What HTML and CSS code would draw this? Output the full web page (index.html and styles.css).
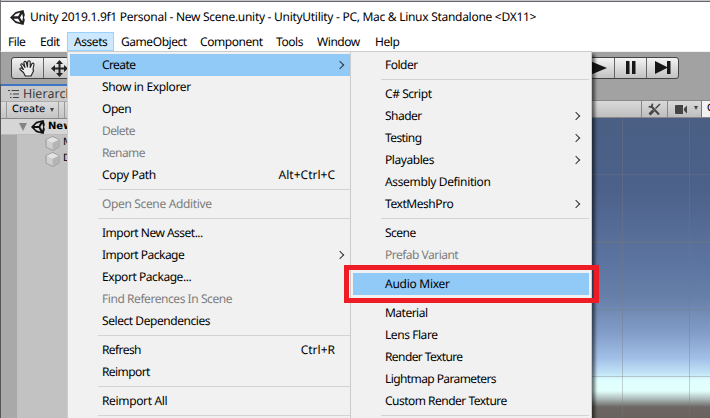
FILE: index.html
```html
<!DOCTYPE html>
<html lang="en">
<head>
<meta charset="utf-8">
<title>Unity Editor</title>
<link rel="stylesheet" href="styles.css">
</head>
<body>
<div class="window">
  <header class="titlebar">
    <svg class="logo" width="15" height="15" viewBox="0 0 15 15" fill="#222" fill-rule="evenodd"><path d="M0 7.500 5.500 2 13.500 0 14.800 5 14 7.500 14.800 10 13.500 15 5.500 13ZM5.700 4 10.200 2.500 8.200 6.300H3.600ZM5.700 11 10.200 12.500 8.200 8.700H3.600ZM10 7.500 12.200 3.700 13 7.500 12.200 11.300Z"/></svg>
    <span class="title">Unity 2019.1.9f1 Personal - New Scene.unity - UnityUtility - PC, Mac &amp; Linux Standalone &lt;DX11&gt;</span>
  </header>
  <nav class="menubar">
    <span class="w-file">File</span><span class="w-edit">Edit</span><span class="w-assets active">Assets</span><span class="w-object">GameObject</span><span class="w-component">Component</span><span class="w-tools">Tools</span><span class="w-window">Window</span><span class="w-help">Help</span>
  </nav>
  <div class="toolbar">
    <div class="group tools">
      <span><svg width="17" height="17" viewBox="0 0 17 17" fill="#eee" stroke="#222" stroke-width="1.100" stroke-linejoin="round"><path d="M6 15.500 4.500 12.500 1 9.500Q.5 7.800 2.300 8L4.500 9.500 1.800 5Q2 3.200 3.500 4L6 7.500 4.800 2.500Q5.800.5 7.200 2L8.500 7 8.700 1.500Q10 0 11.200 1.500V7.500L13 3.500Q14.800 2.500 15 4.500L14 9 14.500 11 12 16H6.500Z"/></svg></span>
      <span><svg width="17" height="17" viewBox="0 0 17 17" fill="#222"><path d="M8.500 0 12 4H9.500V7.500H13V5L17 8.500 13 12V9.500H9.500V13H12L8.500 17 5 13H7.500V9.500H4V12L0 8.500 4 5V7.500H7.500V4H5Z"/></svg></span>
    </div>
    <div class="group play">
      <span><svg width="18" height="14" viewBox="0 0 18 14"><path d="M1 0 18 7 1 14Z" fill="#161616"/></svg></span>
      <span><svg width="10" height="14" viewBox="0 0 10 14"><path d="M0 0H3.500V13H0ZM6 0H9.500V13H6Z" fill="#161616"/></svg></span>
      <span><svg width="16" height="14" viewBox="0 0 16 14"><path d="M0 0 12 6V0H15.500V13H12V7L0 13Z" fill="#161616"/></svg></span>
    </div>
  </div>
  <div class="workspace">
    <div class="edge"></div>
    <section class="hierarchy">
      <div class="tab"><svg width="12" height="10" viewBox="0 0 12 10" stroke="#444" stroke-width="1.200"><path d="M0 1.500H2M3.500 1.500H11M2 5H3.500M5 5H11M2 8.500H3.500M5 8.500H11"/></svg><span>Hierarch</span></div>
      <div class="subbar"><span class="create">Create</span><i class="caret"></i><span class="filter"></span></div>
      <div class="tree">
        <div class="scene"><i class="fold"></i><svg width="14" height="14" viewBox="0 0 15 15" fill="#111" fill-rule="evenodd"><path d="M0 7.500 5.500 2 13.500 0 14.800 5 14 7.500 14.800 10 13.500 15 5.500 13ZM5.700 4 10.200 2.500 8.200 6.300H3.600ZM5.700 11 10.200 12.500 8.200 8.700H3.600ZM10 7.500 12.200 3.700 13 7.500 12.200 11.300Z"/></svg><b>New</b></div>
        <div class="node"><svg width="15" height="15" viewBox="0 0 15 15"><path d="M7.500.5 14 3.500V11L7.500 14.500 1 11V3.500Z" fill="#cfcfcf" stroke="#9a9a9a"/><path d="M1.500 3.800 7.500 1 13.500 3.800 7.500 6.800Z" fill="#e2e2e2"/><path d="M7.500 7V14L13.500 10.800V4Z" fill="#b5b5b5"/></svg><span>M</span></div>
        <div class="node"><svg width="15" height="15" viewBox="0 0 15 15"><path d="M7.500.5 14 3.500V11L7.500 14.500 1 11V3.500Z" fill="#cfcfcf" stroke="#9a9a9a"/><path d="M1.500 3.800 7.500 1 13.500 3.800 7.500 6.800Z" fill="#e2e2e2"/><path d="M7.500 7V14L13.500 10.800V4Z" fill="#b5b5b5"/></svg><span>D</span></div>
      </div>
    </section>
    <section class="sceneview">
      <div class="viewbar">
        <span class="cell wrench"><svg width="13" height="13" viewBox="0 0 13 13" fill="none" stroke="#444"><path d="M3 3 11 11.500" stroke-width="2"/><path d="M.7 3.500Q4 5 4.500.7" stroke-width="1.700"/><path d="M12 1 7.500 5.500" stroke-width="1.500"/><path d="M5.500 7.500 1.500 11.500" stroke-width="3"/></svg></span>
        <span class="cell camera"><svg width="13" height="9" viewBox="0 0 13 9" fill="#444"><path d="M1 0H8V9H1Q0 9 0 8V1Q0 0 1 0ZM9 3.500 12 .5V8.500L9 5.500Z"/></svg><i class="caret"></i></span>
        <span class="search">G</span>
      </div>
      <div class="sky"></div>
    </section>
  </div>
</div>

<div class="menu assets-menu">
  <div class="item hot tight">Create<i class="arrow"></i></div>
  <div class="item loose">Show in Explorer</div>
  <div class="item">Open</div>
  <div class="item off tight">Delete</div>
  <div class="item off tight">Rename</div>
  <div class="item loose">Copy Path<kbd>Alt+Ctrl+C</kbd></div>
  <hr>
  <div class="item off loose">Open Scene Additive</div>
  <hr>
  <div class="item snug">Import New Asset...</div>
  <div class="item snug">Import Package<i class="arrow"></i></div>
  <div class="item">Export Package...</div>
  <div class="item off">Find References In Scene</div>
  <div class="item">Select Dependencies</div>
  <hr>
  <div class="item tight">Refresh<kbd>Ctrl+R</kbd></div>
  <div class="item tight">Reimport</div>
  <hr>
  <div class="item loose">Reimport All</div>
  <hr>
</div>

<div class="menu create-menu">
  <div class="item snug">Folder</div>
  <hr>
  <div class="item">C# Script</div>
  <div class="item snug">Shader<i class="arrow"></i></div>
  <div class="item tight">Testing<i class="arrow"></i></div>
  <div class="item">Playables<i class="arrow"></i></div>
  <div class="item loose">Assembly Definition</div>
  <div class="item">TextMeshPro<i class="arrow"></i></div>
  <hr>
  <div class="item snug">Scene</div>
  <div class="item off snug">Prefab Variant</div>
  <hr>
  <div class="item hot wide">Audio Mixer</div>
  <hr>
  <div class="item snug">Material</div>
  <div class="item">Lens Flare</div>
  <div class="item tight">Render Texture</div>
  <div class="item tight">Lightmap Parameters</div>
  <div class="item snug">Custom Render Texture</div>
  <hr>
</div>
<div class="highlight-box"></div>
</body>
</html>
```
FILE: styles.css
```css
* { box-sizing: border-box; }
body {
  margin: 0;
  width: 710px;
  height: 418px;
  overflow: hidden;
  position: relative;
  font: 12px/22px "Noto Sans", "Open Sans", sans-serif;
  letter-spacing: -.44px;
  text-rendering: geometricPrecision;
  color: #000;
}
svg { display: block; flex: none; }
.window { height: 418px; display: flex; flex-direction: column; background: #a2a2a2; }

.titlebar {
  height: 32px;
  background: linear-gradient(#c6c6ca 1px, #66656a 1px 2px, #fff 2px);
  border-left: 1px solid #77767b;
  display: flex;
  align-items: center;
  padding: 2px 0 0 9px;
}
.title { margin-left: 5px; white-space: nowrap; letter-spacing: -.285px; }
.menubar {
  height: 20px;
  flex: none;
  background: #fff;
  border-left: 1px solid #77767b;
  border-bottom: 1px solid #f0f0f0;
  display: flex;
}
.menubar span { height: 19px; line-height: 19px; padding-left: 7px; white-space: nowrap; }
.w-file { width: 32px; }
.w-edit { width: 34px; }
.w-assets { width: 47px; }
.w-object { width: 79px; }
.w-component { width: 76px; }
.w-tools { width: 41px; }
.w-window { width: 58px; }
.menubar .active { background: #cce8ff; border: 1px solid #99d1ff; line-height: 17px; padding-left: 6px; }

.toolbar {
  height: 32px;
  flex: none;
  display: flex;
  justify-content: space-between;
  padding: 5px 31px 0 10px;
  border-left: 1px solid #77767b;
}
.group { display: flex; height: 22px; border: 1px solid #444; border-radius: 3px; background: linear-gradient(#f4f4f4, #c2c2c2); }
.group span { width: 32px; display: flex; align-items: center; justify-content: center; }
.group span + span { border-left: 1px solid #666; }
.tools span { width: 31px; }

.workspace { flex: 1; display: flex; min-height: 0; letter-spacing: 0; }
.edge { width: 1px; background: #555; }
.hierarchy { width: 229px; border-top: 2px solid #3e74c4; overflow: hidden; }
.tab { height: 15px; display: flex; align-items: center; background: #c9c9c9; padding-left: 7px; color: #333; font: 12.5px/15px "Open Sans", sans-serif; gap: 3px; }
.subbar { height: 18px; display: flex; align-items: center; background: linear-gradient(#dcdcdc, #c4c4c4); border-top: 1px solid #aaa; border-bottom: 1px solid #888; }
.create { width: 53px; margin-left: 5px; border-left: 1px solid #999; border-right: 1px solid #999; padding-left: 5px; font: 10px/16px "DejaVu Sans", sans-serif; }
.filter { width: 20px; height: 16px; margin-left: 10px; border-left: 1px solid #999; }
.caret { border: 2.5px solid transparent; border-top: 4px solid #444; border-bottom: 0; margin-left: -9px; }
.tree { height: 300px; background: linear-gradient(90deg, #a9a9a9 16px, #c2c2c2 16px); font: 10px/16px "DejaVu Sans", sans-serif; }
.scene { height: 16px; display: flex; align-items: center; background: #d6d6d6; padding-left: 18px; border-bottom: 1px solid #bbb; white-space: nowrap; }
.scene svg { margin: 0 3px 0 4px; }
.fold { border: 4.5px solid transparent; border-top: 8px solid #858585; border-bottom: 0; }
.node { height: 16px; display: flex; align-items: center; padding-left: 44px; gap: 3px; white-space: nowrap; }

.sceneview { flex: 1; display: flex; flex-direction: column; padding-top: 16px; }
.viewbar { height: 18px; flex: none; display: flex; justify-content: flex-end; background: linear-gradient(#dadada, #bebebe); border-top: 1px solid #888; border-bottom: 1px solid #888; }
.cell { display: flex; align-items: center; justify-content: center; border-left: 1px solid #888; }
.wrench { width: 26px; padding-right: 1px; }
.camera { width: 34px; gap: 6px; padding-left: 3px; }
.camera .caret { margin: -2px 0 0; }
.search { width: 9px; background: #f2f2f2; border-left: 1px solid #777; padding-left: 5px; font: 10px/16px "DejaVu Sans", sans-serif; overflow: hidden; }
.sky {
  flex: 1;
  background:
    repeating-linear-gradient(90deg, transparent 0 57px, rgba(120, 120, 120, .35) 57px 58px, transparent 58px 67px) 335px 0,
    repeating-linear-gradient(transparent 0 56px, rgba(120, 120, 120, .35) 56px 57px, transparent 57px 67.5px),
    linear-gradient(#4a5f83 0, #4c618a 70px, #5c75a0 145px, #6780aa 180px, #829dc8 215px, #a1bfe7 240px, #c3e5f7 256px, #dfffff 262px, #e2fffc 273px, #acbab9 281px, #6c6764 289px, #6a625e 100%);
}

.menu {
  position: absolute;
  top: 51px;
  height: 380px;
  background: #f1f1f1;
  border: 1px solid #ccc;
  padding-top: 2px;
}
.assets-menu { left: 67px; width: 284px; padding-left: 2px; }
.create-menu { left: 350px; width: 242px; padding-left: 2px; padding-right: 2px; box-shadow: 3px 3px 3px rgba(0, 0, 0, .55); }
.item { height: 22px; display: flex; align-items: center; padding-left: 32px; white-space: nowrap; }
.wide { letter-spacing: -.27px; }
.loose { letter-spacing: -.35px; }
.snug { letter-spacing: -.51px; }
.tight { letter-spacing: -.59px; }
.off { color: #7c7c7c; }
.hot { background: #91c9f7; }
.menu hr { height: 1px; border: 0; margin: 3px 0 3px 28px; background: #d3d3d3; }
.item kbd { font: inherit; letter-spacing: 0; margin-left: auto; padding-right: 15px; }
.arrow { width: 6px; height: 6px; border: solid #333; border-width: 1.2px 1.2px 0 0; transform: rotate(45deg); margin-left: auto; margin-right: 7px; }
.create-menu .arrow { margin-right: 10px; }
.highlight-box { position: absolute; left: 344px; top: 265px; width: 255px; height: 38px; border: 5px solid #ee1c25; }
```
